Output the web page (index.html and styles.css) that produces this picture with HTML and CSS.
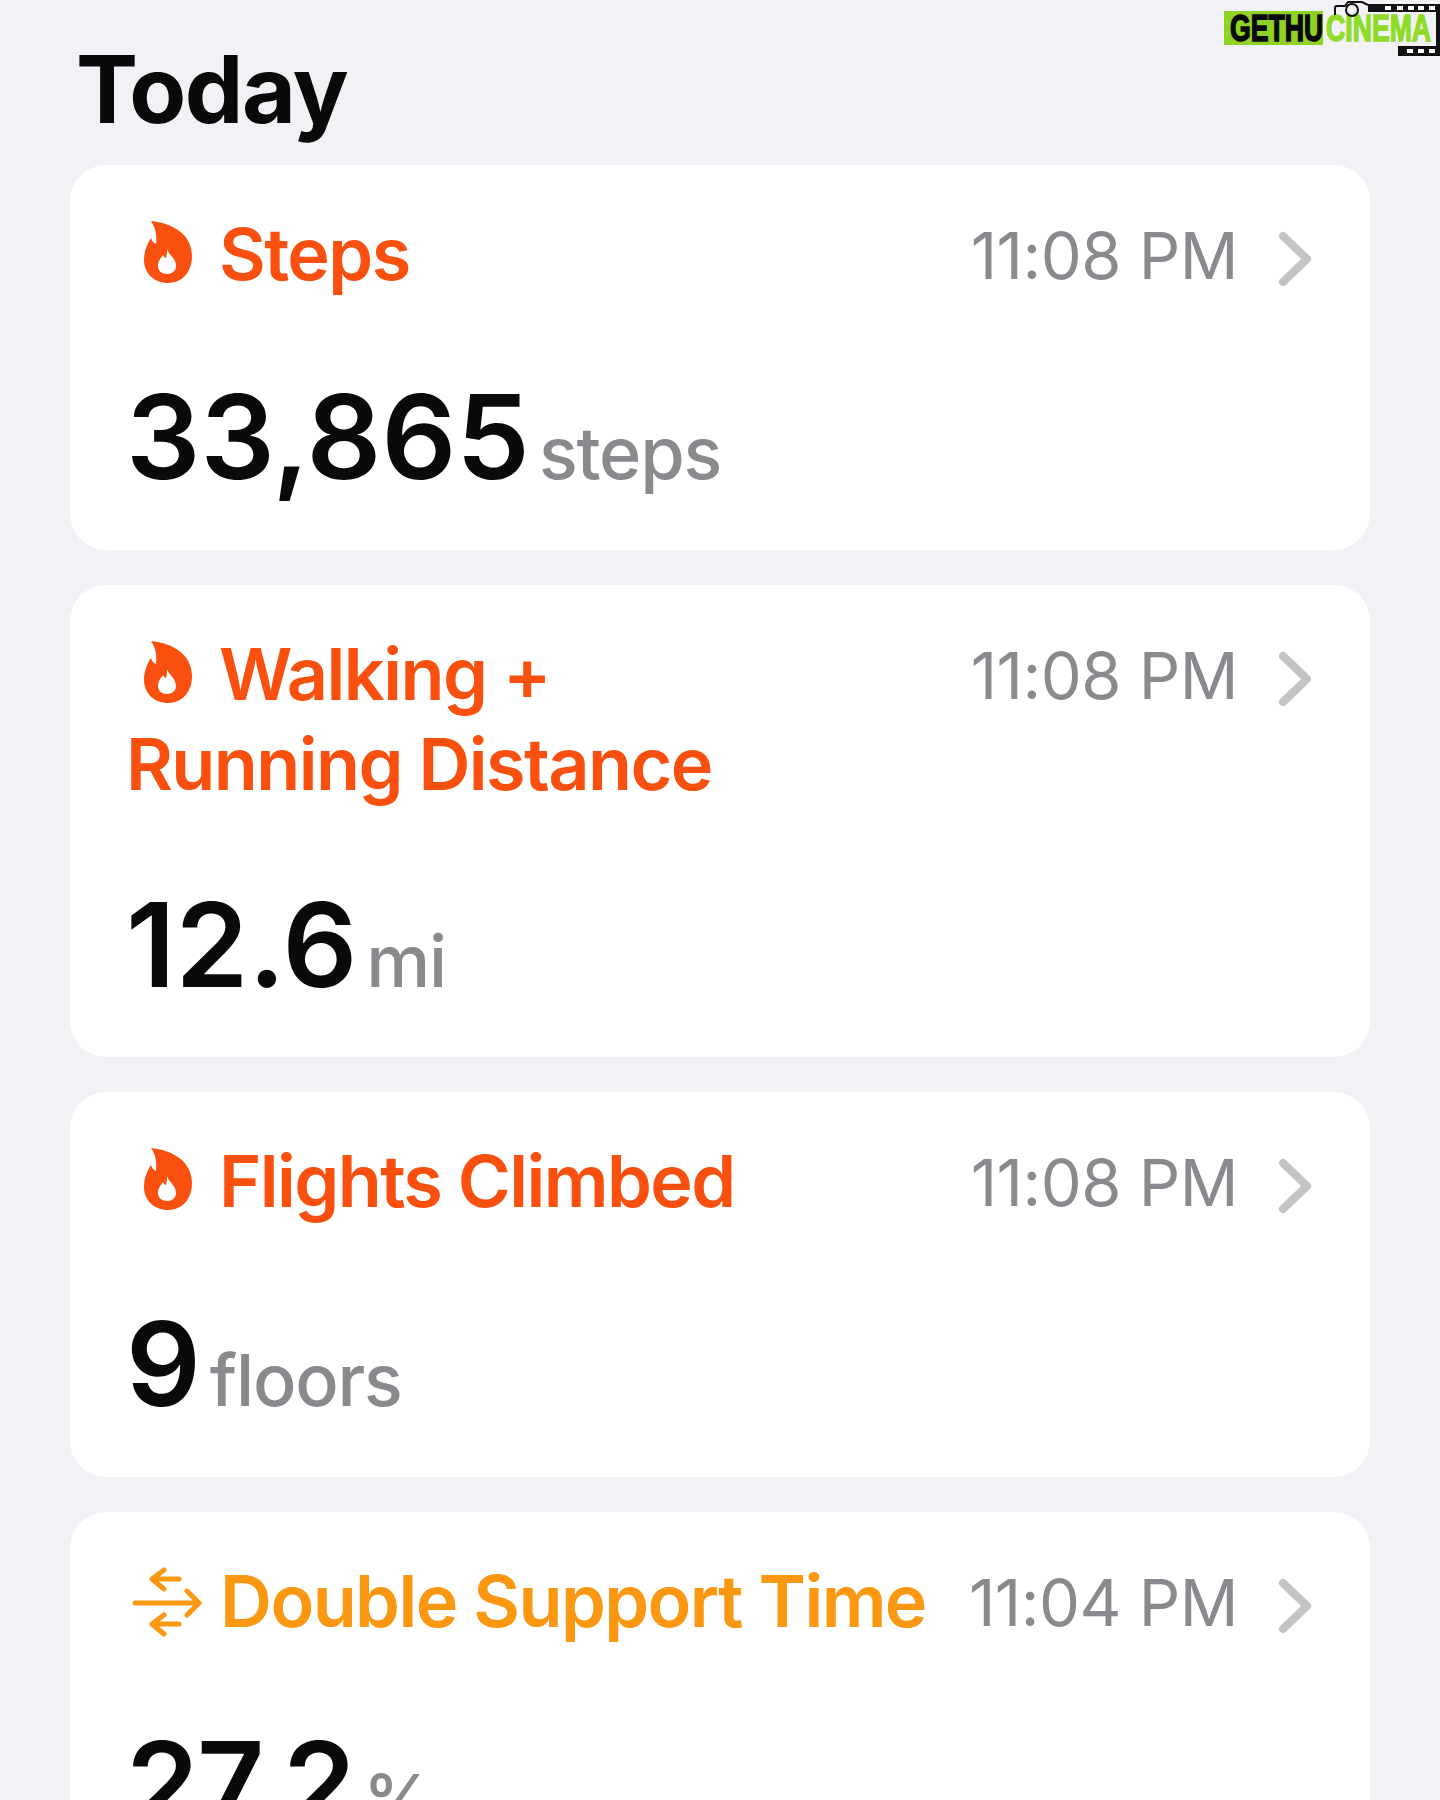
FILE: index.html
```html
<!DOCTYPE html>
<html lang="en">
<head>
    <meta charset="UTF-8">
    <meta name="viewport" content="width=device-width, initial-scale=1.0">
    <title>Today</title>
    <link rel="stylesheet" href="styles.css">
</head>
<body>

    <!-- Watermark -->
    <div class="watermark">
        <div class="wm-gethu"><span class="wm-text">GETHU</span></div>
        <div class="wm-cinema"><span class="wm-text">CINEMA</span></div>
        <svg class="wm-film" width="116" height="58" viewBox="0 0 116 58">
            <path d="M11 15V8q0-2 2-2h8l3-4h14l6 3" fill="none" stroke="#111" stroke-width="2"/>
            <circle cx="28" cy="10" r="6" fill="none" stroke="#111" stroke-width="2"/>
            <rect x="44" y="4" width="72" height="8" fill="#111"/>
            <rect x="74" y="46" width="42" height="10" fill="#111"/>
            <rect x="112" y="4" width="4" height="52" fill="#111"/>
            <g fill="#fff">
                <rect x="61" y="6" width="6" height="4"/><rect x="73" y="6" width="6" height="4"/>
                <rect x="84" y="6" width="6" height="4"/><rect x="94" y="6" width="6" height="4"/>
                <rect x="105" y="6" width="6" height="4"/>
                <rect x="83" y="49" width="6" height="4"/><rect x="94" y="49" width="6" height="4"/>
                <rect x="105" y="49" width="6" height="4"/>
            </g>
        </svg>
    </div>

    <h1 class="page-title">Today</h1>

    <svg width="0" height="0" class="defs">
        <symbol id="flame" viewBox="0 0 50 64">
            <path fill-rule="evenodd" d="M7 1C28 3 48 14 48 36 48 52 38 63 24 63 10 63 0 53 0 40 0 32 3 24 7 18 8 21 9 23 12 24 13 17 12 8 7 1zM23 29C24 34 32 38 32 46 32 51 28 54 23 54 18 54 14 51 14 46 14 41 17 38 19 35 20 37 21 38 22 38 23 35 23 32 23 29z"/>
        </symbol>
        <symbol id="arrows" viewBox="0 0 70 70">
            <g fill="none" stroke="currentColor" stroke-width="5" stroke-linecap="round" stroke-linejoin="round">
                <path d="M20 12h27M32 3L20 12l12 10"/>
                <path d="M3 36h64M55 24l12 12-12 12"/>
                <path d="M20 57h27M32 48L20 57l12 10"/>
            </g>
        </symbol>
        <symbol id="chevron" viewBox="0 0 34 56">
            <path d="M5 5l24 23L5 51" fill="none" stroke="currentColor" stroke-width="8" stroke-linecap="round" stroke-linejoin="round"/>
        </symbol>
    </svg>

    <div class="card">
        <div class="card-top">
            <div class="label red"><svg class="flame"><use href="#flame"/></svg>Steps</div>
            <div class="time">11:08 PM</div>
            <svg class="chevron"><use href="#chevron"/></svg>
        </div>
        <div class="value">33,865<span class="unit">steps</span></div>
    </div>

    <div class="card">
        <div class="card-top">
            <div class="label red"><svg class="flame"><use href="#flame"/></svg>Walking +<br>Running Distance</div>
            <div class="time">11:08 PM</div>
            <svg class="chevron"><use href="#chevron"/></svg>
        </div>
        <div class="value">12.6<span class="unit">mi</span></div>
    </div>

    <div class="card">
        <div class="card-top">
            <div class="label red"><svg class="flame"><use href="#flame"/></svg>Flights Climbed</div>
            <div class="time">11:08 PM</div>
            <svg class="chevron"><use href="#chevron"/></svg>
        </div>
        <div class="value">9<span class="unit">floors</span></div>
    </div>

    <div class="card">
        <div class="card-top">
            <div class="label orange"><svg class="arrows"><use href="#arrows"/></svg>Double Support Time</div>
            <div class="time">11:04 PM</div>
            <svg class="chevron"><use href="#chevron"/></svg>
        </div>
        <div class="value tight">27.2<span class="unit">%</span></div>
    </div>

</body>
</html>
```

FILE: styles.css
```css
html {
    height: 100%;
    overflow: hidden;
}

body {
    font-family: Inter, "Liberation Sans", sans-serif;
    margin: 0;
    height: 1800px;
    overflow: hidden;
    padding: 0 70px;
    box-sizing: border-box;
    background-color: #f1f1f6;
    color: #0a0a0a;
}

.defs {
    position: absolute;
}

.page-title {
    margin: 0;
    padding: 38px 6px 0;
    height: 127px;
    font-size: 93px;
    line-height: 102px;
    font-weight: 700;
    letter-spacing: -1.5px;
}

/* Cards */
.card {
    background-color: #fff;
    border-radius: 36px;
    margin-bottom: 35px;
    padding: 44px 58px 31.5px 56px;
}

.card-top {
    display: flex;
    align-items: flex-start;
}

.label {
    flex: 1;
    font-size: 72px;
    line-height: 90px;
    font-weight: 600;
    letter-spacing: -1.6px;
}

.red {
    color: #fa500f;
}

.orange {
    color: #fc9712;
}

.flame {
    width: 50px;
    height: 64px;
    margin: 0 25px 0 18px;
    vertical-align: -4px;
    fill: #fa500f;
}

.arrows {
    width: 70px;
    height: 70px;
    margin: 0 18px 0 6px;
    vertical-align: -10px;
}

.time {
    padding-top: 2px;
    font-size: 65px;
    line-height: 90px;
    color: #8a8a8e;
    letter-spacing: -0.5px;
}

.chevron {
    width: 34px;
    height: 56px;
    margin: 22px 0 0 40px;
    color: #c4c4c7;
}

.value {
    margin-top: 71px;
    font-size: 117px;
    line-height: 130px;
    font-weight: 600;
}

.tight {
    letter-spacing: -2px;
}

.unit {
    margin-left: 9px;
    font-size: 72px;
    font-weight: 500;
    color: #8a8a8e;
    letter-spacing: -1.2px;
}

/* Watermark */
.watermark {
    position: absolute;
    top: 0;
    right: 0;
    width: 216px;
    height: 58px;
}

.wm-gethu,
.wm-cinema {
    position: absolute;
    top: 11px;
    height: 34px;
    font-family: "Liberation Sans", sans-serif;
    font-size: 36px;
    line-height: 36px;
    font-weight: 700;
    white-space: nowrap;
    -webkit-text-stroke: 1.5px currentColor;
}

.wm-text {
    display: inline-block;
    transform-origin: left center;
    transform: scaleX(0.74);
}

.wm-gethu {
    left: 0;
    width: 99px;
    padding-left: 6px;
    box-sizing: border-box;
    background-color: #8fd124;
    color: #0a0a0a;
}

.wm-cinema {
    left: 102px;
    color: #8fdb28;
}

.wm-film {
    position: absolute;
    top: 0;
    right: 0;
}
```
